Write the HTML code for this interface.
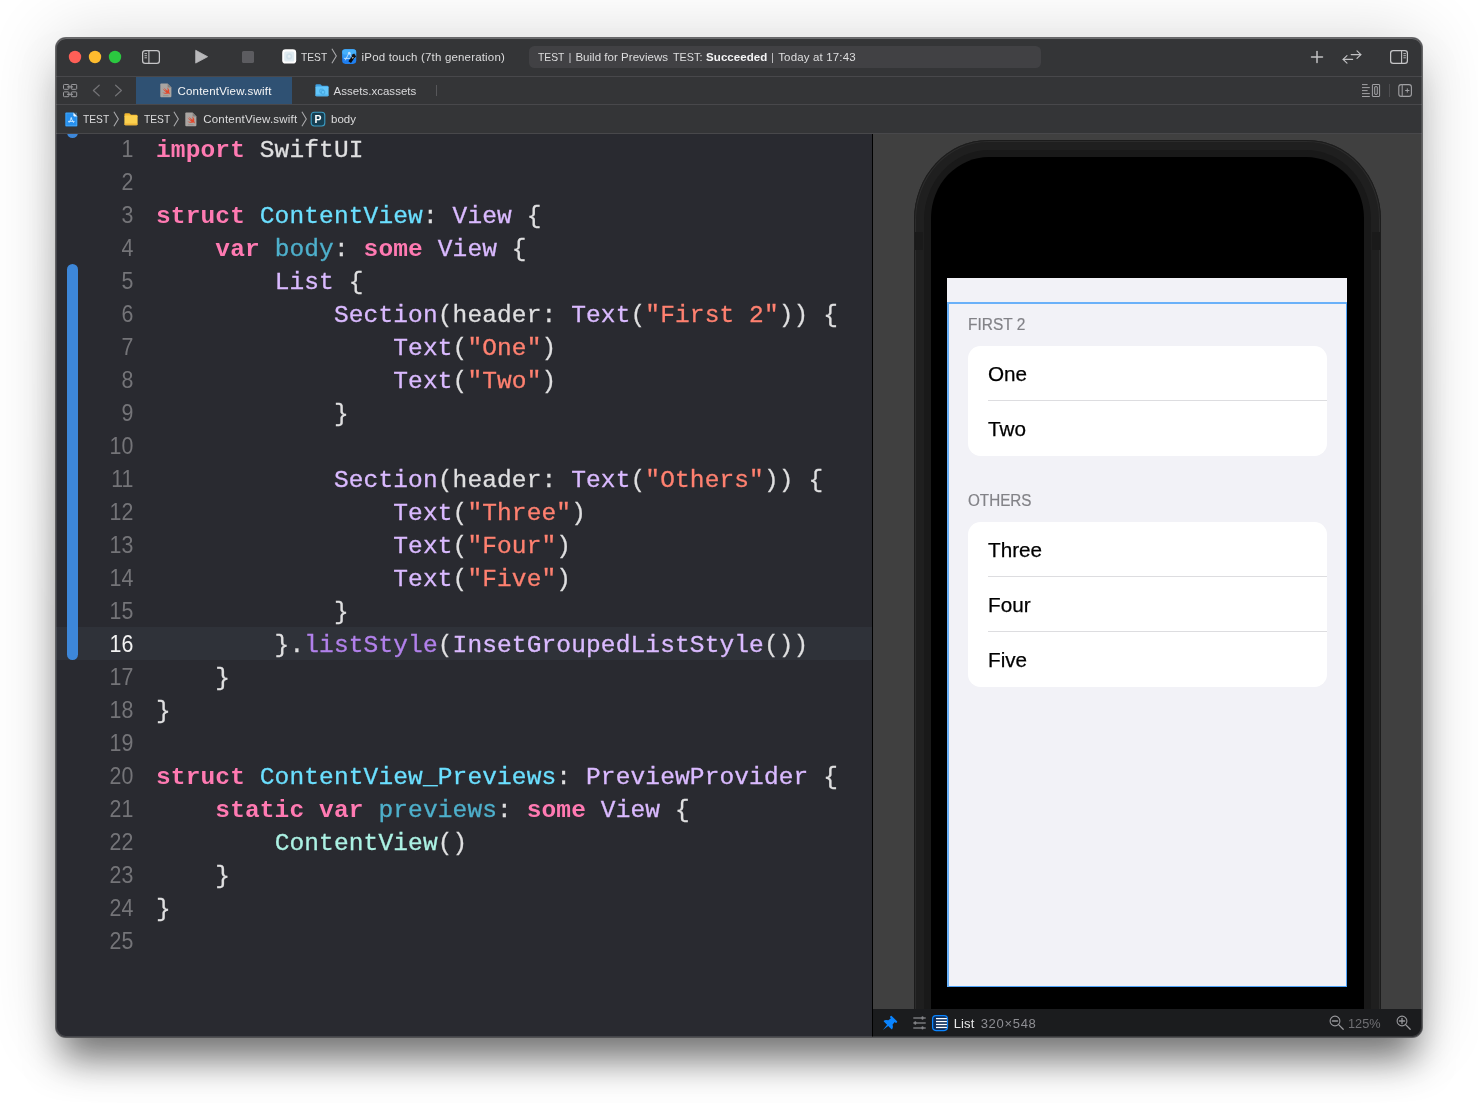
<!DOCTYPE html>
<html lang="en">
<head>
<meta charset="utf-8">
<title>TEST — ContentView.swift</title>
<style>
*{box-sizing:border-box;margin:0;padding:0}
html,body{width:1478px;height:1111px;background:#fff;overflow:hidden}
body{position:relative;font-family:"Liberation Sans",sans-serif}
.abs{position:absolute}
svg{display:block;overflow:visible}
#win{position:absolute;left:56px;top:38px;width:1366px;height:999px;border-radius:10px;background:#292a30;
  box-shadow:0 0 0 1px rgba(70,70,72,.8),0 0 70px rgba(0,0,0,.16)}
#shk{position:absolute;left:0;top:0;width:1478px;height:1111px;-webkit-mask-image:linear-gradient(to bottom,rgba(0,0,0,.5) 0,rgba(0,0,0,.55) 100px,rgba(0,0,0,.8) 400px,#000 620px);mask-image:linear-gradient(to bottom,rgba(0,0,0,.5) 0,rgba(0,0,0,.55) 100px,rgba(0,0,0,.8) 400px,#000 620px)}
#shk i{position:absolute;left:56px;top:38px;width:1366px;height:999px;border-radius:10px;box-shadow:0 28px 36px -6px rgba(0,0,0,.5)}
#inner{position:absolute;inset:0;border-radius:10px;overflow:hidden;will-change:transform}
#rim{position:absolute;inset:0;border-radius:10px;box-shadow:inset 0 0 0 1px rgba(255,255,255,.13),inset 0 1px 0 rgba(255,255,255,.16);pointer-events:none;z-index:50}
#chrome{left:0;top:0;width:1366px;height:96px;background:#343537}
.hl{left:0;width:1366px;height:1px;background:#48484b}
.ui{position:absolute;font-size:11px;color:#dcdcdd;white-space:nowrap;line-height:16px}
#editor{left:0;top:96px;width:816px;height:903px;background:#292a30;overflow:hidden}
#divider{left:816px;top:96px;width:1px;height:903px;background:#000}
#canvas{left:817px;top:96px;width:549px;height:875px;background:#404040;overflow:hidden}
#pbar{left:817px;top:971px;width:549px;height:28px;background:#1b1c1e}
#curline{left:0;top:493px;width:816px;height:33px;background:#2f3239}
#chg0{left:11px;top:-8px;width:11px;height:12px;border-radius:5.5px;background:#3d87d9}
#chg1{left:11px;top:130px;width:11px;height:396px;border-radius:5.5px;background:#3d87d9}
.ln{position:absolute;left:0;width:77.4px;text-align:right;font-size:23px;transform:translateY(-.6px) scaleX(.93);transform-origin:100% 50%;line-height:33px;height:33px;color:#747478}
.ln.cur{color:#f2f2f2}
.cl{position:absolute;left:100px;height:33px;line-height:33px;font-family:"Liberation Mono",monospace;font-size:24.5px;letter-spacing:.125px;color:#dfdfe0;white-space:pre;-webkit-text-stroke:.3px}
.k{color:#ff7ab2;font-weight:bold;-webkit-text-stroke:0}
.d{color:#6bdfff}
.v{color:#4eb0cc}
.t{color:#dabaff}
.s{color:#ff8170}
.f{color:#b281eb}
.p{color:#acf2e4}
.dev-outer{background:#1f1f1f;border-radius:74px / 80px;box-shadow:inset 0 0 0 1px #1c1c1c,inset 0 0 0 2px #2b2b2b}
.dev-mid{background:#191919;border-radius:65px / 70px}
.dev-screen{background:#000;border-radius:58px / 61px}
#app{background:#f2f2f7;overflow:hidden}
.hdr{font-size:16px;line-height:20px;color:#828287;white-space:nowrap;-webkit-text-stroke:.2px #828287}
.row{font-size:21px;line-height:24px;color:#000;white-space:nowrap;-webkit-text-stroke:.25px #000}
.card{background:#fff;border-radius:12.5px}
.sep{height:1px;background:#dddde0}
#sel{border-style:solid;border-color:#6ab1f9 #4fa3f9 #4fa3f9 #6ab1f9;border-width:2px 1px 1px 2px}
</style>
</head>
<body>
<div id="shk"><i></i></div>
<div id="win">
<div id="inner">
<div id="chrome" class="abs">
<div class="abs hl" style="top:38px"></div><div class="abs hl" style="top:66px"></div><div class="abs hl" style="top:95px"></div>
<svg class="abs" style="left:12px;top:12px" width="54" height="14" viewBox="0 0 54 14" ><circle cx="7" cy="7" r="6.2" fill="#fe5f57"/><circle cx="27" cy="7" r="6.2" fill="#febc2e"/><circle cx="47" cy="7" r="6.2" fill="#2bc840"/></svg>
<svg class="abs" style="left:85px;top:11px" width="20" height="16" viewBox="0 0 20 16" ><rect x="1.6" y="1.6" width="16.8" height="12.8" rx="2.6" fill="none" stroke="#c6c6c8" stroke-width="1.25"/><line x1="7.9" y1="1.6" x2="7.9" y2="14.4" stroke="#c6c6c8" stroke-width="1.1"/><g stroke="#c6c6c8" stroke-width="0.9"><line x1="3.5" y1="4.6" x2="6" y2="4.6"/><line x1="3.5" y1="6.7" x2="6" y2="6.7"/><line x1="3.5" y1="8.8" x2="6" y2="8.8"/></g></svg>
<svg class="abs" style="left:138px;top:11px" width="16" height="16" viewBox="0 0 16 16" ><path d="M1.7,1.3 L13.6,7.7 L1.7,14.1 Z" fill="#b9b9bb" stroke="#b9b9bb" stroke-width="0.8" stroke-linejoin="round"/></svg>
<svg class="abs" style="left:186px;top:13px" width="12" height="12" viewBox="0 0 12 12" ><rect x="0" y="0" width="12" height="12" rx="1.6" fill="#5c5c60"/></svg>
<svg class="abs" style="left:226px;top:11px" width="15" height="15" viewBox="0 0 15 15" ><rect x="0.2" y="0.3" width="14" height="14.3" rx="3.4" fill="#fdfdfd"/><rect x="2.2" y="2.4" width="10" height="10.1" rx="1.6" fill="#dfeaf0"/><circle cx="7.2" cy="7.45" r="3.1" fill="#cfdfe8"/><circle cx="7.2" cy="7.45" r="1.4" fill="#e6eef3"/></svg>
<div class="ui" style="left:245.20px;top:11.02px;font-size:11.5px;line-height:16px;color:#dcdcdd;transform:scaleX(0.8914);transform-origin:0 0;">TEST</div>
<svg class="abs" style="left:274.9px;top:10.4px" width="7" height="16" viewBox="0 0 7 16" ><polyline points="0.9,0.8 5.3,8 0.9,15.2" fill="none" stroke="#a9a9ab" stroke-width="1.1" stroke-linejoin="miter"/></svg>
<svg class="abs" style="left:286px;top:11px" width="15" height="16" viewBox="0 0 15 16" ><rect x="0.2" y="0.3" width="14" height="14.6" rx="3.3" fill="#1f7ff0"/><rect x="0.2" y="0.3" width="14" height="10" rx="3.3" fill="#3ba3f8" opacity=".75"/><rect x="0.2" y="0.3" width="14" height="5.4" rx="3.3" fill="#4ab4fb" opacity=".8"/><g stroke="#cfe8ff" stroke-width="0.8" fill="none" stroke-linecap="round"><path d="M3.4,11 L7.2,3.6"/><path d="M7.2,3.6 L9.4,8"/><path d="M2.4,9.4 H8.6"/><circle cx="7.2" cy="4.2" r="0.9"/></g><path d="M6.4,12.2 L10.4,6.4 L12.9,8.2 L9.0,14.0 Z" fill="#0b0b0d"/><path d="M9.4,6.0 L12.2,4.6 L14.1,7.4 L12.6,8.9 Z" fill="#141416"/><path d="M9.6,8.2 L12.0,8.6 L10.6,9.8 Z" fill="#f0f0f0"/></svg>
<div class="ui" style="left:305.60px;top:11.02px;font-size:11.5px;line-height:16px;color:#dcdcdd;letter-spacing:0.172px;">iPod touch (7th generation)</div>
<div class="abs" style="left:473px;top:8px;width:512px;height:22px;border-radius:5.5px;background:#414144"></div>
<div class="ui" style="left:482.30px;top:11.02px;font-size:11.5px;line-height:16px;color:#dededf;transform:scaleX(0.8983);transform-origin:0 0;">TEST</div>
<div class="ui" style="left:512.60px;top:11.02px;font-size:11.5px;line-height:16px;color:#c4c4c6;">|</div>
<div class="ui" style="left:519.40px;top:11.02px;font-size:11.5px;line-height:16px;color:#dededf;letter-spacing:0.033px;">Build for Previews</div>
<div class="ui" style="left:616.60px;top:11.02px;font-size:11.5px;line-height:16px;color:#dededf;transform:scaleX(0.9390);transform-origin:0 0;">TEST:</div>
<div class="ui" style="left:650.10px;top:11.02px;font-size:11.5px;line-height:16px;color:#f4f4f5;letter-spacing:0.060px;font-weight:bold;">Succeeded</div>
<div class="ui" style="left:714.90px;top:11.02px;font-size:11.5px;line-height:16px;color:#c4c4c6;">|</div>
<div class="ui" style="left:722.20px;top:11.02px;font-size:11.5px;line-height:16px;color:#dededf;letter-spacing:0.150px;">Today at 17:43</div>
<svg class="abs" style="left:1254px;top:12px" width="14" height="14" viewBox="0 0 14 14" ><g stroke="#c2c2c4" stroke-width="1.5" stroke-linecap="round"><line x1="7" y1="1.5" x2="7" y2="12.5"/><line x1="1.5" y1="7" x2="12.5" y2="7"/></g></svg>
<svg class="abs" style="left:1286px;top:11px" width="20" height="16" viewBox="0 0 20 16" ><g stroke="#c2c2c4" stroke-width="1.15" fill="none" stroke-linecap="round" stroke-linejoin="round"><line x1="9.2" y1="5.6" x2="18.8" y2="5.6"/><polyline points="15,1.8 18.9,5.6 15,9.4"/><line x1="1.2" y1="10.4" x2="10.6" y2="10.4"/><polyline points="5,6.6 1.1,10.4 5,14.2"/></g></svg>
<svg class="abs" style="left:1333px;top:11px" width="20" height="16" viewBox="0 0 20 16" ><rect x="1.6" y="1.6" width="16.8" height="12.8" rx="2.6" fill="none" stroke="#c6c6c8" stroke-width="1.25"/><line x1="12.6" y1="1.6" x2="12.6" y2="14.4" stroke="#c6c6c8" stroke-width="1.1"/><g stroke="#c6c6c8" stroke-width="0.9"><line x1="14.4" y1="4.6" x2="16.9" y2="4.6"/><line x1="14.4" y1="6.7" x2="16.9" y2="6.7"/><line x1="14.4" y1="8.8" x2="16.9" y2="8.8"/></g></svg>
<div class="abs" style="left:80px;top:39px;width:156px;height:27px;background:#2f5173"></div>
<svg class="abs" style="left:6px;top:45px" width="16" height="15" viewBox="0 0 16 15" ><g fill="none" stroke="#9c9c9f" stroke-width="1"><rect x="1.5" y="1.5" width="5.4" height="4.8" rx="0.8"/><rect x="9.3" y="1.5" width="5.4" height="4.8" rx="0.8"/><rect x="1.5" y="8.9" width="5.4" height="4.8" rx="0.8"/><rect x="9.3" y="8.9" width="5.4" height="4.8" rx="0.8"/><line x1="5" y1="3.9" x2="11" y2="3.9"/><line x1="5" y1="11.3" x2="11" y2="11.3"/></g></svg>
<svg class="abs" style="left:36px;top:46px" width="9" height="13" viewBox="0 0 9 13" ><polyline points="7.2,1.2 1.4,6.5 7.2,11.8" fill="none" stroke="#737376" stroke-width="1.2" stroke-linejoin="round" stroke-linecap="round"/></svg>
<svg class="abs" style="left:58px;top:46px" width="9" height="13" viewBox="0 0 9 13" ><polyline points="1.6,1.2 7.4,6.5 1.6,11.8" fill="none" stroke="#737376" stroke-width="1.2" stroke-linejoin="round" stroke-linecap="round"/></svg>
<svg class="abs" style="left:103.9px;top:45px" width="12" height="15" viewBox="0 0 12 15" ><path d="M1.2,0.6 H7.6 L11.4,4.4 V13.2 Q11.4,14.2 10.4,14.2 H1.2 Q0.3,14.2 0.3,13.2 V1.6 Q0.3,0.6 1.2,0.6 Z" fill="#a9a5a2"/><path d="M7.6,0.6 L11.4,4.4 H8.4 Q7.6,4.4 7.6,3.6 Z" fill="#85817e"/><path d="M2.3,9.2 C4.2,10.9 6.6,11.3 8.0,10.4 C8.7,10.3 9.3,10.9 9.7,11.4 C9.9,10.4 9.5,9.6 9.1,9.0 C9.8,7.3 8.7,5.3 6.9,4.2 C7.8,5.6 7.9,6.9 7.5,7.7 C6.3,6.9 4.9,5.7 3.6,4.5 C4.4,5.8 5.5,7.2 6.5,8.2 C5.2,7.5 3.7,6.4 2.6,5.4 C3.6,6.9 5.0,8.5 6.6,9.5 C5.4,10.0 3.8,9.9 2.3,9.2 Z" fill="#e2472b"/><rect x="3" y="12.4" width="5.6" height="0.7" fill="#8e8a87"/></svg>
<div class="ui" style="left:121.40px;top:45.02px;font-size:11.5px;line-height:16px;color:#f6f6f7;letter-spacing:0.215px;">ContentView.swift</div>
<svg class="abs" style="left:259.1px;top:45.4px" width="14" height="14" viewBox="0 0 14 14" ><path d="M0.4,2.6 Q0.4,1.2 1.8,1.2 H5 Q5.8,1.2 6.3,1.9 L6.9,2.7 H12.2 Q13.6,2.7 13.6,4.1 V5 H0.4 Z" fill="#3e9fe0"/><rect x="0.4" y="3.6" width="13.2" height="9.6" rx="1.5" fill="#63c6fb"/><rect x="0.4" y="11.6" width="13.2" height="1.6" rx="0.8" fill="#4fb2ec"/><rect x="4.8" y="6.2" width="3.6" height="3.6" rx="0.7" fill="none" stroke="#3f9fd8" stroke-width="0.8"/><rect x="6.3" y="7.6" width="3.4" height="3.4" rx="0.7" fill="#63c6fb" stroke="#3f9fd8" stroke-width="0.8"/></svg>
<div class="ui" style="left:277.50px;top:45.02px;font-size:11.5px;line-height:16px;color:#dadadc;letter-spacing:0.026px;">Assets.xcassets</div>
<div class="abs" style="left:380px;top:47px;width:1px;height:11px;background:#57575a"></div>
<svg class="abs" style="left:1305px;top:45px" width="20" height="15" viewBox="0 0 20 15" ><g stroke="#a2a2a5" stroke-width="1" fill="none"><line x1="1" y1="1.6" x2="6.6" y2="1.6"/><line x1="1" y1="4.6" x2="8.8" y2="4.6"/><line x1="1" y1="7.6" x2="6.6" y2="7.6"/><line x1="1" y1="10.6" x2="8.8" y2="10.6"/><line x1="1" y1="13.5" x2="8.8" y2="13.5"/><rect x="11.4" y="1.5" width="7.2" height="12" rx="0.4"/><rect x="13.7" y="3.7" width="2.6" height="7.6" rx="0.3"/></g></svg>
<div class="abs" style="left:1333px;top:46px;width:1px;height:13px;background:#4d4d50"></div>
<svg class="abs" style="left:1341px;top:45px" width="16" height="15" viewBox="0 0 16 15" ><g stroke="#a2a2a5" stroke-width="1.1" fill="none"><rect x="1.8" y="1.6" width="12.6" height="11.8" rx="2.4"/></g><rect x="4.6" y="1.6" width="1.3" height="11.8" fill="#8a8a8d"/><g stroke="#a2a2a5" stroke-width="1"><line x1="8.2" y1="7.5" x2="12.4" y2="7.5"/><line x1="10.3" y1="5.4" x2="10.3" y2="9.6"/></g></svg>
<svg class="abs" style="left:8.6px;top:73.6px" width="13" height="15" viewBox="0 0 13 15" ><path d="M1.2,0.4 H8.4 L12.4,4.4 V13.4 Q12.4,14.4 11.4,14.4 H1.2 Q0.3,14.4 0.3,13.4 V1.4 Q0.3,0.4 1.2,0.4 Z" fill="#2690ee"/><path d="M8.4,0.4 L12.4,4.4 H9.2 Q8.4,4.4 8.4,3.6 Z" fill="#eef6ff"/><rect x="1" y="1.1" width="10.7" height="12.6" fill="none" stroke="#6cc2ff" stroke-width="0.6" opacity=".55"/><g stroke="#bfe2ff" stroke-width="1" fill="none" stroke-linecap="round"><path d="M4.2,10.4 L6.3,6.6 L8.4,10.4"/><path d="M3.4,9.4 H9.2"/><circle cx="6.3" cy="6.2" r="0.9" fill="#bfe2ff" stroke="none"/></g></svg>
<div class="ui" style="left:27.30px;top:73.02px;font-size:11.5px;line-height:16px;color:#dcdcdd;transform:scaleX(0.8914);transform-origin:0 0;">TEST</div>
<svg class="abs" style="left:57.3px;top:73.2px" width="7" height="16" viewBox="0 0 7 16" ><polyline points="0.9,0.8 5.3,8 0.9,15.2" fill="none" stroke="#a9a9ab" stroke-width="1.1" stroke-linejoin="miter"/></svg>
<svg class="abs" style="left:67.9px;top:73.7px" width="14" height="14" viewBox="0 0 14 14" ><path d="M0.4,2.6 Q0.4,1.2 1.8,1.2 H5 Q5.8,1.2 6.3,1.9 L6.9,2.7 H12.2 Q13.6,2.7 13.6,4.1 V5 H0.4 Z" fill="#f3b92f"/><rect x="0.4" y="3.6" width="13.2" height="9.6" rx="1.5" fill="#fbd04e"/><rect x="0.4" y="11.6" width="13.2" height="1.6" rx="0.8" fill="#eeb63a"/></svg>
<div class="ui" style="left:87.60px;top:73.02px;font-size:11.5px;line-height:16px;color:#dcdcdd;transform:scaleX(0.8914);transform-origin:0 0;">TEST</div>
<svg class="abs" style="left:117.3px;top:73.2px" width="7" height="16" viewBox="0 0 7 16" ><polyline points="0.9,0.8 5.3,8 0.9,15.2" fill="none" stroke="#a9a9ab" stroke-width="1.1" stroke-linejoin="miter"/></svg>
<svg class="abs" style="left:129.3px;top:73.6px" width="12" height="15" viewBox="0 0 12 15" ><path d="M1.2,0.6 H7.6 L11.4,4.4 V13.2 Q11.4,14.2 10.4,14.2 H1.2 Q0.3,14.2 0.3,13.2 V1.6 Q0.3,0.6 1.2,0.6 Z" fill="#a9a5a2"/><path d="M7.6,0.6 L11.4,4.4 H8.4 Q7.6,4.4 7.6,3.6 Z" fill="#85817e"/><path d="M2.3,9.2 C4.2,10.9 6.6,11.3 8.0,10.4 C8.7,10.3 9.3,10.9 9.7,11.4 C9.9,10.4 9.5,9.6 9.1,9.0 C9.8,7.3 8.7,5.3 6.9,4.2 C7.8,5.6 7.9,6.9 7.5,7.7 C6.3,6.9 4.9,5.7 3.6,4.5 C4.4,5.8 5.5,7.2 6.5,8.2 C5.2,7.5 3.7,6.4 2.6,5.4 C3.6,6.9 5.0,8.5 6.6,9.5 C5.4,10.0 3.8,9.9 2.3,9.2 Z" fill="#e2472b"/><rect x="3" y="12.4" width="5.6" height="0.7" fill="#8e8a87"/></svg>
<div class="ui" style="left:147.20px;top:73.02px;font-size:11.5px;line-height:16px;color:#dcdcdd;letter-spacing:0.215px;">ContentView.swift</div>
<svg class="abs" style="left:244.8px;top:73.2px" width="7" height="16" viewBox="0 0 7 16" ><polyline points="0.9,0.8 5.3,8 0.9,15.2" fill="none" stroke="#a9a9ab" stroke-width="1.1" stroke-linejoin="miter"/></svg>
<svg class="abs" style="left:254px;top:73px" width="16" height="16" viewBox="0 0 16 16" ><rect x="1.2" y="1.2" width="13.6" height="13.8" rx="3" fill="#173f52" stroke="#3b9cc4" stroke-width="1.1"/><text x="8" y="12" text-anchor="middle" font-family="Liberation Sans, sans-serif" font-weight="bold" font-size="10.5" fill="#ffffff">P</text></svg>
<div class="ui" style="left:274.80px;top:73.02px;font-size:11.5px;line-height:16px;color:#dcdcdd;transform:scaleX(0.9985);transform-origin:0 0;">body</div>
</div>
<div id="editor" class="abs">
<div class="abs" id="curline"></div>
<div class="abs" id="chg0"></div><div class="abs" id="chg1"></div>
<div class="ln" style="top:0px">1</div>
<div class="cl" style="top:0px"><span class="k">import</span> SwiftUI</div>
<div class="ln" style="top:33px">2</div>
<div class="ln" style="top:66px">3</div>
<div class="cl" style="top:66px"><span class="k">struct</span> <span class="d">ContentView</span>: <span class="t">View</span> {</div>
<div class="ln" style="top:99px">4</div>
<div class="cl" style="top:99px">    <span class="k">var</span> <span class="v">body</span>: <span class="k">some</span> <span class="t">View</span> {</div>
<div class="ln" style="top:132px">5</div>
<div class="cl" style="top:132px">        <span class="t">List</span> {</div>
<div class="ln" style="top:165px">6</div>
<div class="cl" style="top:165px">            <span class="t">Section</span>(header: <span class="t">Text</span>(<span class="s">"First 2"</span>)) {</div>
<div class="ln" style="top:198px">7</div>
<div class="cl" style="top:198px">                <span class="t">Text</span>(<span class="s">"One"</span>)</div>
<div class="ln" style="top:231px">8</div>
<div class="cl" style="top:231px">                <span class="t">Text</span>(<span class="s">"Two"</span>)</div>
<div class="ln" style="top:264px">9</div>
<div class="cl" style="top:264px">            }</div>
<div class="ln" style="top:297px">10</div>
<div class="ln" style="top:330px">11</div>
<div class="cl" style="top:330px">            <span class="t">Section</span>(header: <span class="t">Text</span>(<span class="s">"Others"</span>)) {</div>
<div class="ln" style="top:363px">12</div>
<div class="cl" style="top:363px">                <span class="t">Text</span>(<span class="s">"Three"</span>)</div>
<div class="ln" style="top:396px">13</div>
<div class="cl" style="top:396px">                <span class="t">Text</span>(<span class="s">"Four"</span>)</div>
<div class="ln" style="top:429px">14</div>
<div class="cl" style="top:429px">                <span class="t">Text</span>(<span class="s">"Five"</span>)</div>
<div class="ln" style="top:462px">15</div>
<div class="cl" style="top:462px">            }</div>
<div class="ln cur" style="top:495px">16</div>
<div class="cl" style="top:495px">        }.<span class="f">listStyle</span>(<span class="t">InsetGroupedListStyle</span>())</div>
<div class="ln" style="top:528px">17</div>
<div class="cl" style="top:528px">    }</div>
<div class="ln" style="top:561px">18</div>
<div class="cl" style="top:561px">}</div>
<div class="ln" style="top:594px">19</div>
<div class="ln" style="top:627px">20</div>
<div class="cl" style="top:627px"><span class="k">struct</span> <span class="d">ContentView_Previews</span>: <span class="t">PreviewProvider</span> {</div>
<div class="ln" style="top:660px">21</div>
<div class="cl" style="top:660px">    <span class="k">static</span> <span class="k">var</span> <span class="v">previews</span>: <span class="k">some</span> <span class="t">View</span> {</div>
<div class="ln" style="top:693px">22</div>
<div class="cl" style="top:693px">        <span class="p">ContentView</span>()</div>
<div class="ln" style="top:726px">23</div>
<div class="cl" style="top:726px">    }</div>
<div class="ln" style="top:759px">24</div>
<div class="cl" style="top:759px">}</div>
<div class="ln" style="top:792px">25</div>
</div>
<div id="divider" class="abs"></div>
<div id="canvas" class="abs">
<div class="abs dev-outer" style="left:41.4px;top:6.2px;width:466.6px;height:1000px"></div>
<div class="abs dev-mid" style="left:51.0px;top:16.0px;width:447.4px;height:1000px"></div>
<div class="abs dev-screen" style="left:58.0px;top:23.4px;width:433.0px;height:1000px"></div>
<div class="abs" style="left:42.4px;top:97.5px;width:8px;height:18px;background:#1a1a1a"></div>
<div class="abs" style="left:499.2px;top:97.5px;width:8px;height:18px;background:#1a1a1a"></div>
<div class="abs" id="app" style="left:74px;top:144px;width:400px;height:709px">
<div class="abs hdr" style="left:21.2px;top:37.06px;transform:scaleX(0.9667);transform-origin:0 0">FIRST 2</div>
<div class="abs card" style="left:20.5px;top:68.2px;width:359.8px;height:109.8px"></div>
<div class="abs sep" style="left:40.5px;top:122.2px;width:339.8px"></div>
<div class="abs row" style="left:40.8px;top:84.02px;transform:scaleX(0.985);transform-origin:0 0">One</div>
<div class="abs row" style="left:40.8px;top:139.02px;transform:scaleX(0.985);transform-origin:0 0">Two</div>
<div class="abs hdr" style="left:21.2px;top:212.76px;transform:scaleX(0.9524);transform-origin:0 0">OTHERS</div>
<div class="abs card" style="left:20.5px;top:243.8px;width:359.8px;height:164.8px"></div>
<div class="abs sep" style="left:40.5px;top:298.1px;width:339.8px"></div>
<div class="abs sep" style="left:40.5px;top:353.0px;width:339.8px"></div>
<div class="abs row" style="left:40.8px;top:259.72px;transform:scaleX(0.985);transform-origin:0 0">Three</div>
<div class="abs row" style="left:40.8px;top:314.72px;transform:scaleX(0.985);transform-origin:0 0">Four</div>
<div class="abs row" style="left:40.8px;top:369.72px;transform:scaleX(0.985);transform-origin:0 0">Five</div>
<div class="abs" id="sel" style="left:0;top:24px;width:400px;height:685px"></div>
</div>
</div>
<div id="pbar" class="abs">
<svg class="abs" style="left:9px;top:5px" width="18" height="18" viewBox="826 976 18 18"><g transform="translate(838.35 980.6) rotate(45)"><path d="M-4.4,0.6 Q-4.4,0 -3.8,0 H3.8 Q4.4,0 4.4,0.6 V1.5 Q4.4,2.1 3.8,2.1 H2.7 L3,5.5 Q5.9,6.9 5.9,9 Q5.9,9.5 5.4,9.5 H0.8 L0,16.2 L-0.8,9.5 H-5.4 Q-5.9,9.5 -5.9,9 Q-5.9,6.9 -3,5.5 L-2.7,2.1 H-3.8 Q-4.4,2.1 -4.4,1.5 Z" fill="#0a84ff"/></g></svg>
<svg class="abs" style="left:39px;top:5px" width="16" height="18" viewBox="856 976 16 18"><g stroke="#77777b" stroke-width="1.5" stroke-linecap="round"><line x1="857.8" y1="980" x2="869.2" y2="980"/><line x1="857.8" y1="984.95" x2="869.2" y2="984.95"/><line x1="857.8" y1="989.9" x2="869.2" y2="989.9"/></g><g fill="#828286"><rect x="865.5" y="978.3" width="2" height="3.4" rx="1"/><rect x="858.3" y="983.25" width="2" height="3.4" rx="1"/><rect x="865.5" y="988.2" width="2" height="3.4" rx="1"/></g></svg>
<svg class="abs" style="left:58px;top:5px" width="18" height="18" viewBox="875 976 18 18"><rect x="876.6" y="977.5" width="14.9" height="15" rx="3.4" fill="#0d2c58" stroke="#0a84ff" stroke-width="1.25"/><g stroke="#ffffff" stroke-width="1.3"><line x1="880" y1="980.6" x2="890.9" y2="980.6"/><line x1="880" y1="983.55" x2="890.9" y2="983.55"/><line x1="880" y1="986.5" x2="890.9" y2="986.5"/><line x1="880" y1="989.45" x2="890.9" y2="989.45"/></g></svg>
<div class="ui" style="left:80.70px;top:6.60px;font-size:13px;line-height:16px;color:#e6e6e7;letter-spacing:0.123px;">List</div>
<div class="ui" style="left:107.70px;top:6.60px;font-size:13px;line-height:16px;color:#8e8e93;letter-spacing:0.688px;">320×548</div>
<svg class="abs" style="left:455.9000000000001px;top:6.2999999999999545px" width="16" height="16" viewBox="0 0 16 16" ><g stroke="#97979b" fill="none" stroke-linecap="round"><circle cx="6" cy="6" r="4.9" stroke-width="1.1"/><line x1="9.6" y1="9.6" x2="14.2" y2="14.2" stroke-width="1.3"/><g stroke-width="1.3"><line x1="3.4" y1="6" x2="8.6" y2="6"/></g></g></svg>
<div class="ui" style="left:474.60px;top:6.60px;font-size:13px;line-height:16px;color:#6f6f73;transform:scaleX(0.9805);transform-origin:0 0;">125%</div>
<svg class="abs" style="left:523.0px;top:6.2999999999999545px" width="16" height="16" viewBox="0 0 16 16" ><g stroke="#97979b" fill="none" stroke-linecap="round"><circle cx="6" cy="6" r="4.9" stroke-width="1.1"/><line x1="9.6" y1="9.6" x2="14.2" y2="14.2" stroke-width="1.3"/><g stroke-width="1.3"><line x1="3.4" y1="6" x2="8.6" y2="6"/><line x1="6" y1="3.4" x2="6" y2="8.6"/></g></g></svg>
</div>
</div>
<div id="rim"></div>
</div>
</body>
</html>
